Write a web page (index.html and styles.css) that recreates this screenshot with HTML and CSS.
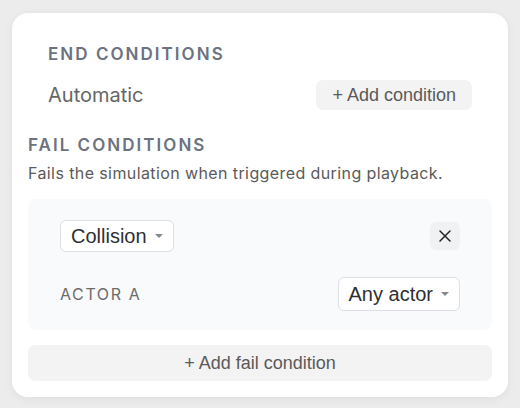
FILE: index.html
```html
<!DOCTYPE html>
<html>
<head>
<meta charset="utf-8">
<link rel="stylesheet" href="styles.css">
</head>
<body>
<div class="card">
  <section class="end">
    <h2 class="heading">END CONDITIONS</h2>
    <div class="end-row">
      <span class="end-value">Automatic</span>
      <button class="btn-soft">+ Add condition</button>
    </div>
  </section>
  <section class="fail">
    <h2 class="heading">FAIL CONDITIONS</h2>
    <p class="desc">Fails the simulation when triggered during playback.</p>
    <div class="panel">
      <div class="panel-row">
        <div class="select">Collision <span class="caret"></span></div>
        <button class="close" aria-label="Remove">
          <svg width="14" height="14" viewBox="0 0 14 14"><path d="M2 2L12 12M12 2L2 12" stroke="#222" stroke-width="1.5" stroke-linecap="round"/></svg>
        </button>
      </div>
      <div class="panel-row actor-row">
        <span class="field-label">ACTOR A</span>
        <div class="select select-tall">Any actor <span class="caret"></span></div>
      </div>
    </div>
    <button class="btn-soft btn-wide">+ Add fail condition</button>
  </section>
</div>
</body>
</html>
```

FILE: styles.css
```css
html, body {
  margin: 0;
  padding: 0;
}
body {
  background: #ececec;
  width: 520px;
  height: 408px;
  overflow: hidden;
  font-family: Inter, "Liberation Sans", sans-serif;
}
.card {
  margin: 13px 12px 0 12px;
  width: 496px;
  height: 384px;
  box-sizing: border-box;
  background: #fff;
  border-radius: 16px;
  box-shadow: 0 2px 10px rgba(0,0,0,0.06);
  padding: 30px 16px 16px 16px;
}
.heading {
  margin: 0;
  font-size: 17px;
  line-height: 22px;
  font-weight: 600;
  letter-spacing: 0.12em;
  color: #6b7280;
}
.end {
  padding: 0 20px;
}
.end-row {
  display: flex;
  align-items: center;
  justify-content: space-between;
  margin-top: 15px;
}
.end-value {
  font-size: 20px;
  color: #666;
}
.btn-soft {
  font-family: "Liberation Sans", Arial, sans-serif;
  font-size: 18px;
  color: #5a5a5a;
  background: #f3f3f3;
  border: none;
  border-radius: 7px;
  padding: 0 16px;
  height: 30px;
}
.fail {
  margin-top: 24px;
}
.desc {
  margin: 7px 0 0 0;
  font-size: 16px;
  line-height: 20px;
  color: #5a5a5a;
  letter-spacing: 0.025em;
}
.panel {
  margin-top: 16px;
  background: #f8fafc;
  border-radius: 8px;
  padding: 21px 32px 19px 32px;
}
.panel-row {
  display: flex;
  align-items: center;
  justify-content: space-between;
}
.actor-row {
  margin-top: 25px;
}
.select {
  display: flex;
  align-items: center;
  gap: 8px;
  font-family: "Liberation Sans", Arial, sans-serif;
  font-size: 20px;
  color: #2f2f33;
  background: #fff;
  border: 1.5px solid #dcdfe3;
  border-radius: 6px;
  padding: 0 10px;
  height: 32px;
  box-sizing: border-box;
}
.select-tall {
  height: 34px;
}
.caret {
  width: 0;
  height: 0;
  border-left: 4px solid transparent;
  border-right: 4px solid transparent;
  border-top: 4px solid #888;
}
.close {
  width: 30px;
  height: 28px;
  border: none;
  border-radius: 6px;
  background: #f0f1f2;
  display: flex;
  align-items: center;
  justify-content: center;
  padding: 0;
}
.field-label {
  font-size: 16px;
  letter-spacing: 0.1em;
  color: #6b6b6b;
}
.btn-wide {
  display: block;
  width: 100%;
  height: 36px;
  margin-top: 15px;
}
```
